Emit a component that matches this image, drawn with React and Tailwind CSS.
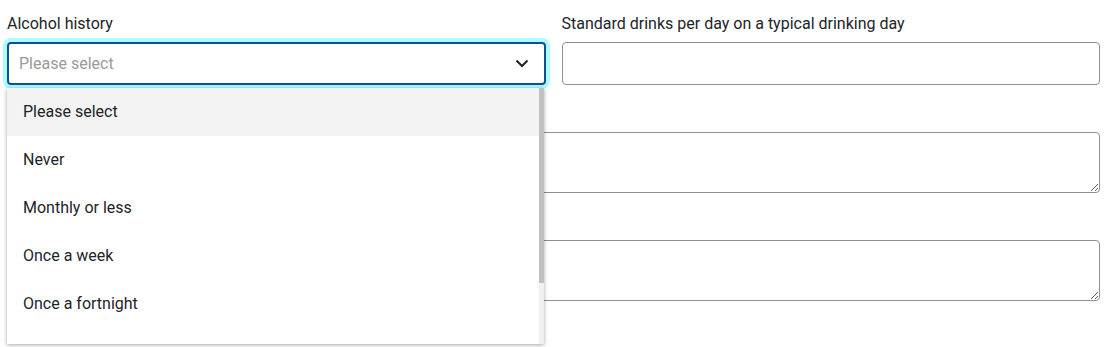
import React from 'react';

const options = ['Please select', 'Never', 'Monthly or less', 'Once a week', 'Once a fortnight'];

const Field = ({ label, children }) => (
  <div className="flex flex-col">
    <label className="mb-2 text-base leading-5 text-[#212529]">{label}</label>
    {children}
  </div>
);

const App = () => {
  return (
    <div
      className="relative h-[347px] w-[1106px] overflow-hidden bg-white pl-[7px] pr-[6px] pt-[14px]"
      style={{ fontFamily: 'Roboto, "Liberation Sans", sans-serif' }}
    >
      {/* Top row */}
      <div className="grid grid-cols-2 gap-4">
        <Field label="Alcohol history">
          <div className="flex h-[43px] items-center justify-between rounded-[4px] border-2 border-[#0b4f9a] pl-[10px] pr-[15px] shadow-[0_0_0_4px_#adfbfd]">
            <span className="text-base text-[#9a9a9a]">Please select</span>
            <svg width="14" height="9" viewBox="0 0 14 9" fill="none">
              <path d="M1.5 1.5 L7 7 L12.5 1.5" stroke="#222" strokeWidth="2" />
            </svg>
          </div>
        </Field>
        <Field label="Standard drinks per day on a typical drinking day">
          <input className="h-[43px] rounded-[4px] border border-[#8f8f8f] px-3 outline-none" />
        </Field>
      </div>

      {/* Textareas (their labels sit under the open menu) */}
      <textarea className="mt-[47px] block h-[61px] w-full rounded-[4px] border border-[#8f8f8f] px-3 py-2 outline-none" />
      <textarea className="mt-[47px] block h-[61px] w-full rounded-[4px] border border-[#8f8f8f] px-3 py-2 outline-none" />

      {/* Open dropdown menu */}
      <div className="absolute left-[7px] top-[88px] flex h-[256px] w-[537px] overflow-hidden bg-white shadow-[0_1px_4px_rgba(0,0,0,0.35)]">
        <ul className="flex-1">
          {options.map((o, i) => (
            <li
              key={o}
              className={`flex h-12 items-center pl-4 text-base text-[#212529] ${i === 0 ? 'bg-[#f3f3f3]' : ''}`}
            >
              {o}
            </li>
          ))}
        </ul>
        <div className="flex w-[5px] flex-col bg-[#f1f1f1]">
          <div className="h-[195px] bg-[#c1c1c1]" />
        </div>
      </div>
    </div>
  );
};

export default App;
